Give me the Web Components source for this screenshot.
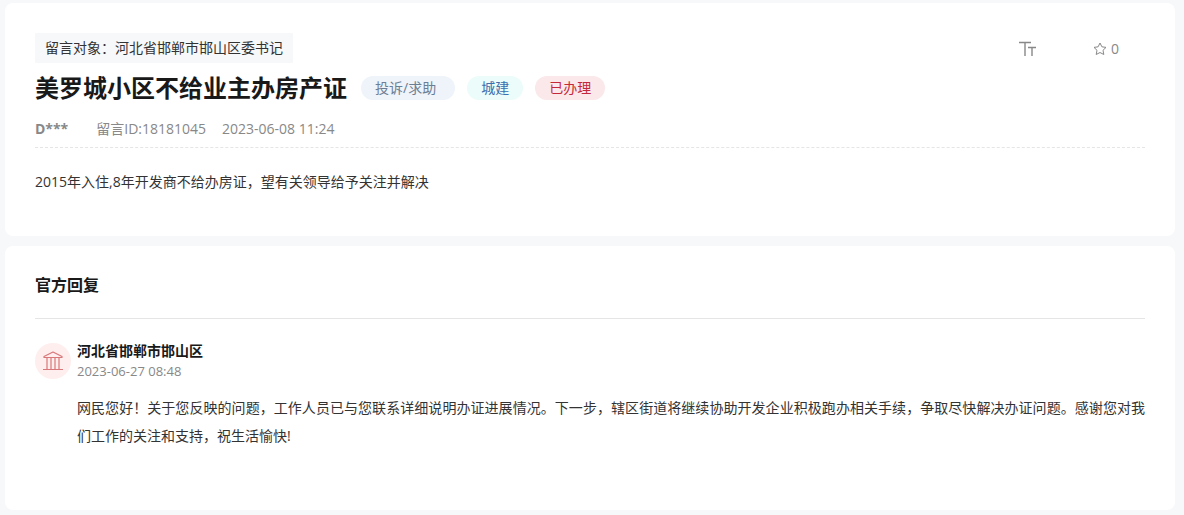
<!DOCTYPE html>
<html lang="zh-CN">
<head>
<meta charset="utf-8">
<title>美罗城小区不给业主办房产证</title>
<style>
  body {
    margin: 0;
    background: #f7f8fa;
    color: #333;
    font: 14px/20px "Open Sans", "Noto Sans CJK SC", sans-serif;
  }
</style>
</head>
<body>
<message-page>
  <page-card>
    <message-toolbar target="河北省邯郸市邯山区委书记" stars="0"></message-toolbar>
    <message-title>美罗城小区不给业主办房产证
      <tag-pill slot="tags" kind="type">投诉/求助</tag-pill>
      <tag-pill slot="tags" kind="field">城建</tag-pill>
      <tag-pill slot="tags" kind="status">已办理</tag-pill>
    </message-title>
    <message-meta author="D***" number="18181045" time="2023-06-08 11:24"></message-meta>
    <message-body>2015年入住,8年开发商不给办房证，望有关领导给予关注并解决</message-body>
  </page-card>
  <page-card>
    <section-heading>官方回复</section-heading>
    <official-reply time="2023-06-27 08:48"><span slot="name">河北省邯郸市邯山区</span>网民您好！关于您反映的问题，工作人员已与您联系详细说明办证进展情况。下一步，辖区街道将继续协助开发企业积极跑办相关手续，争取尽快解决办证问题。感谢您对我们工作的关注和支持，祝生活愉快!</official-reply>
  </page-card>
</message-page>
<script>
  class Base extends HTMLElement {
    connectedCallback() {
      if (this.shadowRoot) return;
      this.attachShadow({ mode: "open" }).innerHTML = this.template();
    }
  }
  const define = (name, template) => customElements.define(name, class extends Base {
    template() { return template(this); }
  });

  define("message-page", () => `
    <style>
      :host { display: block; }
      main { display: flex; flex-direction: column; gap: 10px; padding: 3px 9px 5px 5px; }
    </style>
    <main><slot></slot></main>`);

  define("page-card", () => `
    <style>
      :host { display: block; }
      section { background: #fff; border-radius: 8px; padding: 30px 30px 40px; }
    </style>
    <section><slot></slot></section>`);

  define("message-toolbar", el => `
    <style>
      :host { display: flex; justify-content: space-between; align-items: center; padding-right: 26px; }
      .target { background: #f7f8fa; padding: 5px 10px; }
      .actions { display: flex; align-items: center; gap: 56px; padding-top: 2px; }
      button { display: flex; align-items: center; gap: 4px; margin: 0; padding: 0; border: 0;
        background: none; color: #888; font: inherit; cursor: pointer; }
      svg { display: block; fill: none; stroke: currentColor; }
    </style>
    <div class="target">留言对象：${el.getAttribute("target")}</div>
    <div class="actions">
      <button type="button" aria-label="字号">
        <svg width="18" height="16" viewBox="0 0 18 16" stroke-width="1.4"><path d="M0 1.500h12M6 1.500V15M9 6.500h8M13 6.500V15"/></svg>
      </button>
      <button type="button" aria-label="收藏">
        <svg width="14" height="14" viewBox="0 0 14 14" stroke-linejoin="round"><path d="M7 1l1.900 3.800 4.100.6-3 2.900.8 4.200L7 10.500l-3.800 2 .8-4.200-3-2.900 4.100-.6z"/></svg>
        <span>${el.getAttribute("stars")}</span>
      </button>
    </div>`);

  define("message-title", () => `
    <style>
      :host { display: flex; align-items: center; gap: 14px; margin-top: 6px; }
      h1 { margin: 0; color: #191919; font-size: 24px; line-height: 38px; font-weight: 700; }
      .tags { display: flex; gap: 12px; }
    </style>
    <h1><slot></slot></h1>
    <div class="tags"><slot name="tags"></slot></div>`);

  define("tag-pill", () => `
    <style>
      :host { display: block; padding: 0 14px; border-radius: 12px; line-height: 24px; }
      :host([kind="type"]) { padding-right: 19px; background: #eff3fa; color: #6b7f94; }
      :host([kind="field"]) { background: #ebfcfa; color: #3a70b0; }
      :host([kind="status"]) { background: #fae8ea; color: #c5283a; }
    </style>
    <slot></slot>`);

  define("message-meta", el => `
    <style>
      :host { display: flex; padding: 12px 0 8px; border-bottom: 1px dashed #e5e5e5; color: #888; }
      b { margin-right: 28px; }
      span { margin-right: 16px; }
    </style>
    <b>${el.getAttribute("author")}</b>
    <span>留言ID:${el.getAttribute("number")}</span>
    <time>${el.getAttribute("time")}</time>`);

  define("message-body", () => `
    <style>
      :host { display: block; }
      p { margin: 20px 0 0; line-height: 28px; }
    </style>
    <p><slot></slot></p>`);

  define("section-heading", () => `
    <style>
      :host { display: block; border-bottom: 1px solid #e5e5e5; padding-bottom: 24px; }
      h2 { margin: 0; color: #191919; font-size: 16px; line-height: 18px; font-weight: 700; }
    </style>
    <h2><slot></slot></h2>`);

  define("official-reply", el => `
    <style>
      :host { display: block; padding: 22px 0 20px; }
      article { display: grid; grid-template-columns: 36px 1fr; column-gap: 6px; }
      .avatar { display: grid; place-items: center; width: 36px; height: 36px; margin-top: 2px;
        border-radius: 50%; background: #feeeee; color: #d9777a; }
      svg { display: block; fill: none; stroke: currentColor; }
      h3 { margin: 0; color: #191919; font-size: 14px; line-height: 20px; font-weight: 700; }
      time { display: block; color: #888; font-size: 13px; line-height: 20px; }
      p { margin: 13px 0 0; line-height: 28px; text-align: justify; }
    </style>
    <article>
      <div class="avatar">
        <svg width="20" height="20" viewBox="0 0 20 20" stroke-width="1.2" stroke-linejoin="round"><path d="M1 5.500L10 1l9 4.500v1H1zM4 6.500v12M8 6.500v12M12 6.500v12M16 6.500v12M0 18.500h20"/></svg>
      </div>
      <div>
        <h3><slot name="name"></slot></h3>
        <time>${el.getAttribute("time")}</time>
        <p><slot></slot></p>
      </div>
    </article>`);
</script>
</body>
</html>
